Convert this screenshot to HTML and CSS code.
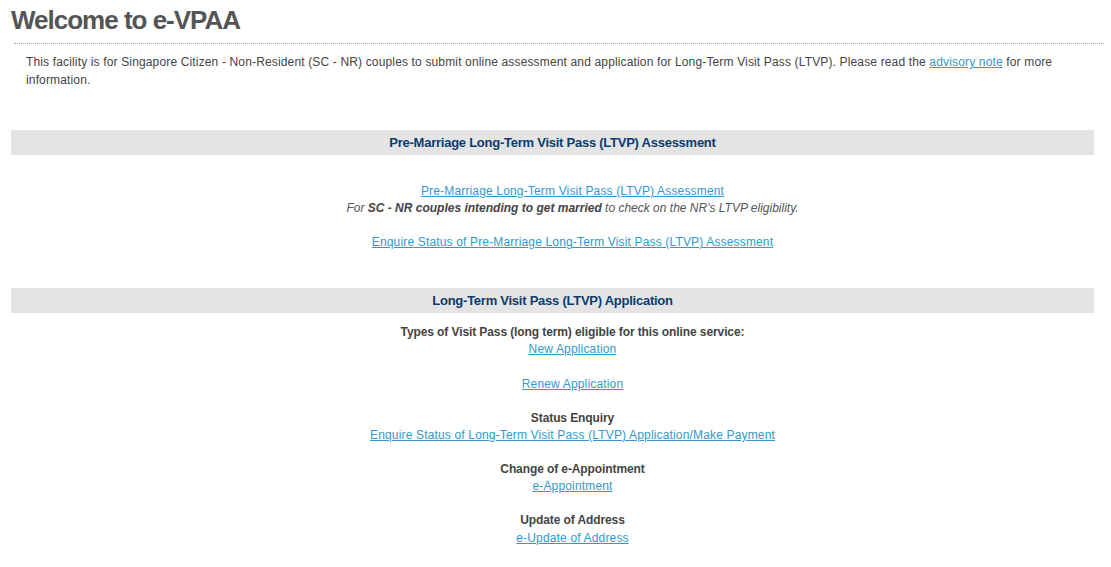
FILE: index.html
```html
<!DOCTYPE html>
<html>
	<head>
		<meta charset="UTF-8">
		<title>Welcome to e-VPAA</title>
		<link rel="stylesheet" href="styles.css">
	</head>
	<body>
		<div class="wrap">
			<h1 class="title">Welcome to e-VPAA</h1>
			<div class="intro">
				<p>This facility is for Singapore Citizen - Non-Resident (SC - NR) couples to submit online assessment and application for Long-Term Visit Pass (LTVP). Please read the <a href="javascript:;">advisory note</a> for more information.</p>
			</div>

			<div class="sec sec_first">
				<h2 class="sec_head">Pre-Marriage Long-Term Visit Pass (LTVP) Assessment</h2>
				<div class="sec_body sec_body_top">
					<a href="javascript:;">Pre-Marriage Long-Term Visit Pass (LTVP) Assessment</a><br>
					<i>For <b>SC - NR couples intending to get married</b> to check on the NR's LTVP eligibility.</i><br>
					<br>
					<a href="javascript:;">Enquire Status of Pre-Marriage Long-Term Visit Pass (LTVP) Assessment</a>
				</div>
			</div>

			<div class="sec">
				<h2 class="sec_head">Long-Term Visit Pass (LTVP) Application</h2>
				<div class="sec_body">
					<b>Types of Visit Pass (long term) eligible for this online service:</b><br>
					<a href="javascript:;">New Application</a><br>
					<br>
					<a href="javascript:;">Renew Application</a><br>
					<br>
					<b>Status Enquiry</b><br>
					<a href="javascript:;">Enquire Status of Long-Term Visit Pass (LTVP) Application/Make Payment</a><br>
					<br>
					<b>Change of e-Appointment</b><br>
					<a href="javascript:;">e-Appointment</a><br>
					<br>
					<b>Update of Address</b><br>
					<a href="javascript:;">e-Update of Address</a>
				</div>
			</div>
		</div>
	</body>
</html>
```

FILE: styles.css
```css
body,
h1,
h2,
p {
    margin: 0;
    padding: 0;
}

body {
    font-family: "Liberation Sans", Arial, sans-serif;
    color: #555;
    background: #fff;
}

a {
    color: #3399cc;
    text-decoration: underline;
    letter-spacing: 0.16px;
}

.wrap {
    padding: 4px 17px 0 11px;
}

.title {
    font: bold 26px/32px "Liberation Sans", Arial, sans-serif;
    color: #555;
    letter-spacing: -1px;
    margin-bottom: 7px;
}

.intro {
    border-top: 1px dotted #aaa;
    margin: 0 -10px 0 3px;
    padding: 9px 30px 0 12px;
}

.intro p {
    font-size: 12px;
    line-height: 18px;
    color: #444;
    letter-spacing: 0.15px;
}

.sec {
    margin-top: 37px;
}

.sec_first {
    margin-top: 41px;
}

.sec_head {
    height: 25px;
    background: #e4e4e4;
    font: bold 13px/25px "Liberation Sans", Arial, sans-serif;
    color: #0c3b6e;
    text-align: center;
    letter-spacing: -0.25px;
}

.sec_body {
    padding: 11px 0 0 40px;
    font-size: 12px;
    line-height: 17.1px;
    text-align: center;
}

.sec_body_top {
    padding-top: 28px;
}

.sec_body b {
    color: #444;
    letter-spacing: -0.1px;
}

.sec_body i {
    color: #555;
}

.sec_body i b {
    letter-spacing: 0;
}
```
